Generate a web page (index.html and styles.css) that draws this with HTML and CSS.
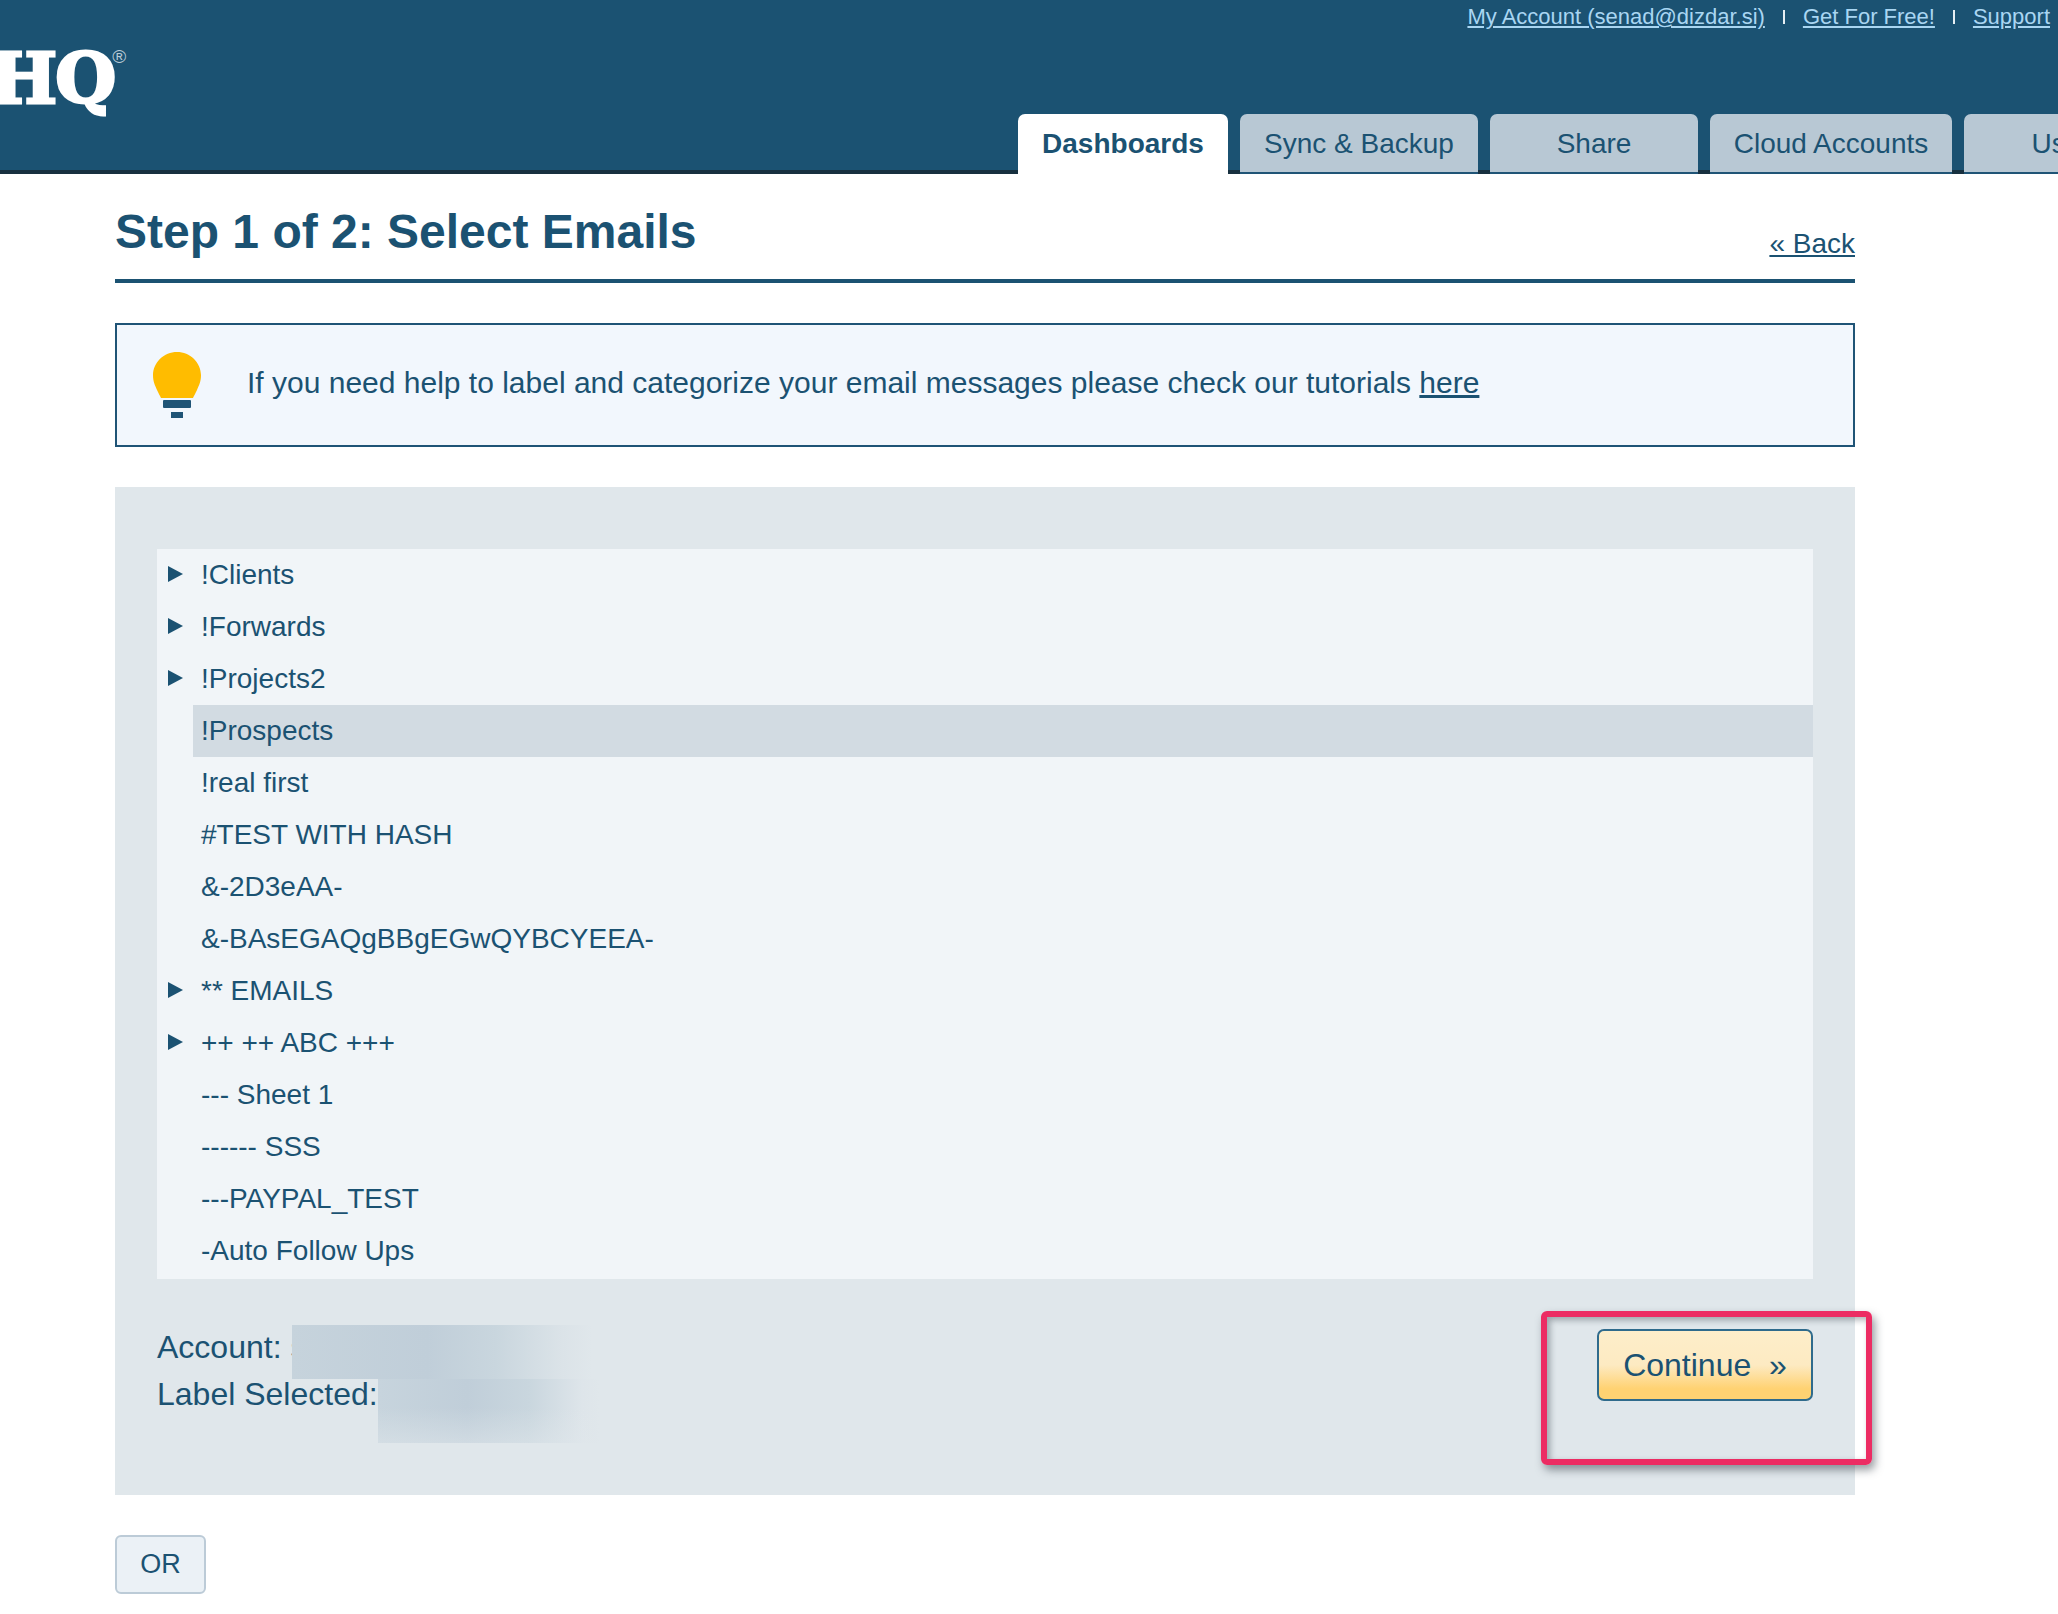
FILE: index.html
```html
<!DOCTYPE html>
<html lang="en">
<head>
<meta charset="utf-8">
<title>Step 1 of 2: Select Emails</title>
<link rel="stylesheet" href="styles.css">
</head>
<body>
<header class="topbar">
  <div class="logo"><span class="logo-text">HQ</span><span class="logo-reg">®</span></div>
  <div class="topnav">
    <div class="toplinks">
      <a href="#">My Account (senad@dizdar.si)</a><span class="sep"></span>
      <a href="#">Get For Free!</a><span class="sep"></span>
      <a href="#">Support</a>
    </div>
    <nav class="tabs">
      <a class="tab tab-active tab-dash" href="#">Dashboards</a>
      <a class="tab tab-sync" href="#">Sync &amp; Backup</a>
      <a class="tab tab-share" href="#">Share</a>
      <a class="tab tab-cloud" href="#">Cloud Accounts</a>
      <a class="tab tab-users" href="#">Users</a>
    </nav>
  </div>
</header>
<main class="content">
  <div class="title-row">
    <h1 class="title">Step 1 of 2: Select Emails</h1>
    <a class="back" href="#">« Back</a>
  </div>
  <div class="notice">
    <svg class="bulb" width="48" height="66" viewBox="0 0 48 66">
      <path d="M24 0C11 0 0 10.5 0 23c0 7 2 10 4 15 1.500 3 3 6 4 8h32c1-2 2.500-5 4-8 2-5 4-8 4-15C48 10.500 37 0 24 0z" fill="#ffbc00"/>
      <rect x="10" y="48" width="28" height="8" rx="1" fill="#1f5476"/>
      <rect x="18" y="60" width="12" height="6" fill="#1f5476"/>
    </svg>
    <p class="notice-text">If you need help to label and categorize your email messages please check our tutorials <a href="#">here</a></p>
  </div>
  <section class="panel">
    <ul class="tree">
      <li class="row"><span class="arrow"></span><span class="name">!Clients</span></li>
      <li class="row"><span class="arrow"></span><span class="name">!Forwards</span></li>
      <li class="row"><span class="arrow"></span><span class="name">!Projects2</span></li>
      <li class="row row-selected"><span class="noarrow"></span><span class="name">!Prospects</span></li>
      <li class="row"><span class="noarrow"></span><span class="name">!real first</span></li>
      <li class="row"><span class="noarrow"></span><span class="name">#TEST WITH HASH</span></li>
      <li class="row"><span class="noarrow"></span><span class="name">&amp;-2D3eAA-</span></li>
      <li class="row"><span class="noarrow"></span><span class="name">&amp;-BAsEGAQgBBgEGwQYBCYEEA-</span></li>
      <li class="row"><span class="arrow"></span><span class="name">** EMAILS</span></li>
      <li class="row"><span class="arrow"></span><span class="name">++ ++ ABC +++</span></li>
      <li class="row"><span class="noarrow"></span><span class="name">--- Sheet 1</span></li>
      <li class="row"><span class="noarrow"></span><span class="name">------ SSS</span></li>
      <li class="row"><span class="noarrow"></span><span class="name">---PAYPAL_TEST</span></li>
      <li class="row"><span class="noarrow"></span><span class="name">-Auto Follow Ups</span></li>
    </ul>
    <div class="panel-foot">
      <div class="meta">
        <div class="meta-row"><span class="meta-label">Account: s</span><span class="blur blur-a"></span></div>
        <div class="meta-row"><span class="meta-label">Label Selected:</span><span class="blur blur-b"></span></div>
      </div>
      <a class="continue" href="#">Continue&nbsp; »</a>
      <div class="annotation"></div>
    </div>
  </section>
  <button class="or" type="button">OR</button>
</main>
</body>
</html>
```
FILE: styles.css
```css
* { box-sizing: border-box; }
html, body { margin: 0; padding: 0; }
body {
  width: 2058px;
  height: 1614px;
  overflow: hidden;
  background: #fff;
  color: #1b5272;
  font-family: "Liberation Sans", Arial, sans-serif;
}
.topbar {
  height: 174px;
  background: #1b5272;
  border-bottom: 4px solid #17303f;
  display: flex;
  justify-content: space-between;
}
.logo {
  width: 140px;
  padding-top: 33px;
  display: flex;
  align-items: flex-start;
  color: #fff;
}
.logo-text {
  font-family: "DejaVu Serif", serif;
  font-weight: 700;
  font-size: 70px;
  line-height: 92px;
  margin-left: -9px;
  -webkit-text-stroke: 3px #fff;
  letter-spacing: -2px;
}
.logo-reg {
  font-size: 19px;
  line-height: 19px;
  margin-top: 14px;
  margin-left: -2px;
  color: #b9cad6;
}
.topnav {
  width: 1040px;
  height: 174px;
  overflow: hidden;
  display: flex;
  flex-direction: column;
}
.toplinks {
  height: 114px;
  padding: 4px 8px 0 0;
  display: flex;
  justify-content: flex-end;
  align-items: flex-start;
  font-size: 22px;
  line-height: 26px;
}
.toplinks a { color: #a9d6f2; }
.sep {
  width: 2px;
  height: 14px;
  background: #e6eef3;
  margin: 6px 18px 0;
}
.tabs {
  display: flex;
  gap: 12px;
  height: 60px;
}
.tab {
  flex: none;
  height: 60px;
  border-radius: 7px 7px 0 0;
  background: #b8c8d4;
  border-bottom: 2px solid #1f5476;
  color: #1b5272;
  text-decoration: none;
  font-size: 28px;
  line-height: 60px;
  text-align: center;
}
.tab-active { background: #fff; border-bottom: 0; font-weight: 700; }
.tab-dash { width: 210px; }
.tab-sync { width: 238px; }
.tab-share { width: 208px; }
.tab-cloud { width: 242px; }
.tab-users { width: 208px; }
.content {
  width: 1740px;
  margin-left: 115px;
}
.title-row {
  height: 109px;
  border-bottom: 4px solid #1b5272;
  display: flex;
  justify-content: space-between;
  align-items: flex-start;
}
.title {
  margin: 31px 0 0;
  font-size: 48px;
  line-height: 54px;
  font-weight: 700;
}
.back {
  margin-top: 53px;
  font-size: 28px;
  line-height: 34px;
  color: #1b5272;
}
.notice {
  margin-top: 40px;
  height: 124px;
  border: 2px solid #1f5476;
  background: #f2f7fd;
  display: flex;
  align-items: center;
  padding-left: 36px;
}
.bulb { flex: none; }
.notice-text {
  margin: -5px 0 0 46px;
  font-size: 30px;
  line-height: 36px;
}
.notice-text a { color: #1b5272; }
.panel {
  margin-top: 40px;
  height: 1008px;
  background: #e0e7eb;
  padding: 62px 42px 0;
}
.tree {
  list-style: none;
  margin: 0;
  padding: 0 0 2px;
  background: #f1f5f8;
}
.row {
  height: 52px;
  display: flex;
  align-items: center;
  padding-left: 11px;
  font-size: 28px;
  line-height: 52px;
}
.arrow {
  flex: none;
  width: 0;
  height: 0;
  margin-right: 18px;
  margin-top: -2px;
  border-left: 15px solid #1b5272;
  border-top: 8px solid transparent;
  border-bottom: 8px solid transparent;
}
.noarrow { flex: none; width: 33px; }
.row-selected { background: #d2dbe2; margin-left: 36px; padding-left: 8px; }
.row-selected .noarrow { display: none; }
.panel-foot {
  position: relative;
  display: flex;
  justify-content: space-between;
  padding-top: 45px;
}
.meta {
  font-size: 32px;
  line-height: 47px;
}
.meta-row { height: 47px; display: flex; }
.meta-label { white-space: pre; }
.blur {
  display: block;
  flex: none;
}
.blur-a {
  width: 300px;
  height: 54px;
  margin: 1px 0 0 -14px;
  background: linear-gradient(90deg, #c6d3dc 0%, #c0ced9 45%, #c9d6de 68%, #dbe3e8 90%, #e0e7eb 100%);
}
.blur-b {
  width: 222px;
  height: 64px;
  margin-top: 8px;
  background:
    linear-gradient(180deg, rgba(224, 231, 235, 0) 45%, rgba(224, 231, 235, 0.5) 100%),
    linear-gradient(90deg, #c7d4dd 0%, #c0ced9 40%, #c9d6de 68%, #dee5ea 92%, #e0e7eb 100%);
}
.continue {
  flex: none;
  width: 216px;
  height: 72px;
  margin-top: 5px;
  border: 2px solid #2f6b8c;
  border-radius: 7px;
  background: linear-gradient(180deg, #fdeeca 0%, #fdeac2 50%, #ffd272 85%, #ffd272 100%);
  color: #1b5272;
  text-decoration: none;
  font-size: 32px;
  line-height: 68px;
  text-align: center;
}
.annotation {
  position: absolute;
  left: 1384px;
  top: 32px;
  width: 331px;
  height: 154px;
  border: 6px solid #ec2c63;
  border-radius: 6px;
  box-shadow: 3px 5px 8px rgba(50, 60, 70, 0.5), inset 3px 3px 6px rgba(50, 60, 70, 0.4);
}
.or {
  display: block;
  margin-top: 40px;
  width: 91px;
  height: 59px;
  padding: 0;
  border: 2px solid #bccbd7;
  border-radius: 6px;
  background: #ebf1f6;
  color: #1b5272;
  font-family: "Liberation Sans", Arial, sans-serif;
  font-size: 27px;
}
```
